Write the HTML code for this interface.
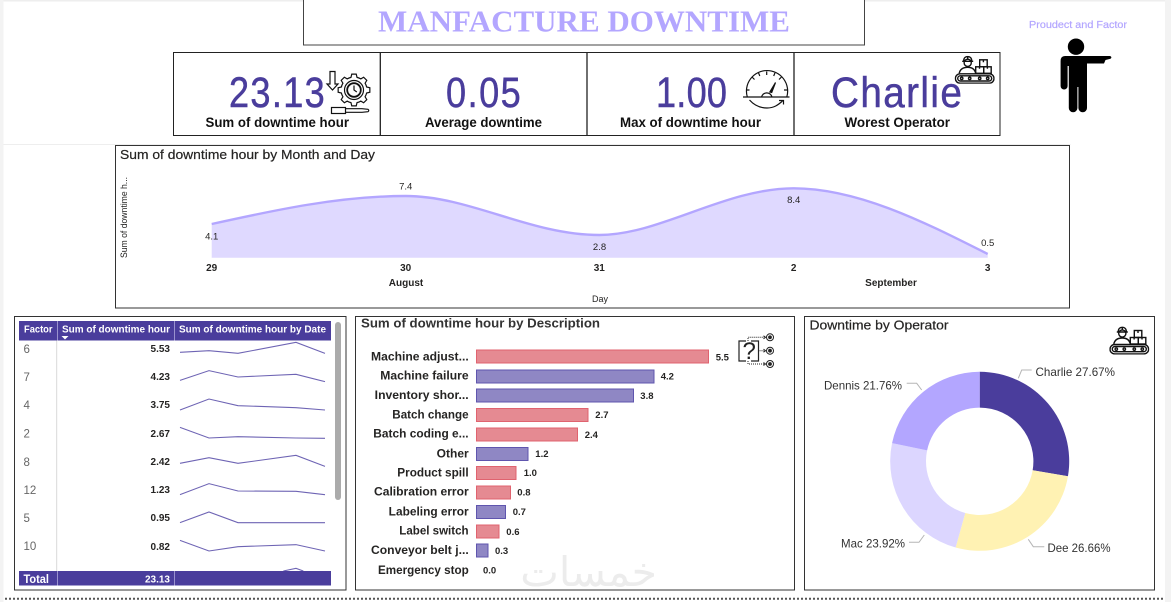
<!DOCTYPE html>
<html lang="en">
<head>
<meta charset="utf-8">
<title>Manfacture Downtime</title>
<style>
html,body{margin:0;padding:0;width:1171px;height:602px;overflow:hidden;background:#fff}
svg{display:block;font-family:"Liberation Sans",sans-serif}
.t{fill:#252423}
.b{font-weight:bold}
</style>
</head>
<body>
<svg width="1171" height="602" viewBox="0 0 1171 602" xmlns="http://www.w3.org/2000/svg">
<defs>
<symbol id="conv" viewBox="0 0 40 28" width="40" height="28">
  <g fill="none" stroke="#111" stroke-width="1.4">
    <rect x=".7" y="18" width="38.6" height="9.4" rx="4.7"/>
    <rect x="3" y="20" width="34" height="5.2" rx="2.6"/>
    <circle cx="7" cy="22.6" r="1.2"/><circle cx="15" cy="22.6" r="1.2"/><circle cx="25" cy="22.6" r="1.2"/><circle cx="33" cy="22.6" r="1.2"/>
    <path d="M4.5 17.5C5.5 13 9 11.5 13 11.5S20 13 21 17.5"/>
    <circle cx="13" cy="7" r="3.6"/>
    <path d="M7.5 5.5H18.5M9 5C9 2 11 .8 13 .8S17 2 17 5M13 .5V3.5"/>
    <rect x="21" y="11" width="8" height="6.5"/><rect x="29" y="11" width="7.5" height="6.5"/><rect x="25" y="4" width="7.5" height="7"/>
    <path d="M28.7 4V6.5M24.8 11V13M32.7 11V13"/>
  </g>
</symbol>
</defs>

<!-- page chrome -->
<rect x="0" y="0" width="1171" height="1.5" fill="#eeeeee"/>
<rect x="0" y="0" width="3.5" height="602" fill="#f3f3f3"/>
<rect x="1165" y="0" width="6" height="602" fill="#f3f3f3"/>
<rect x="3.5" y="144" width="1067" height="1" fill="#eeeeee"/>
<line x1="5" y1="598.8" x2="1165" y2="598.8" stroke="#555" stroke-width="2" stroke-dasharray="2 2"/>

<!-- title -->
<rect x="303.5" y="-2" width="561" height="47" fill="#fff" stroke="#444" stroke-width="1"/>
<text x="378" y="31.5" textLength="412" lengthAdjust="spacingAndGlyphs" font-family="'Liberation Serif',serif" font-weight="bold" font-size="30.5" fill="#B3A6FF">MANFACTURE DOWNTIME</text>

<!-- KPI row -->
<rect x="173.5" y="52.5" width="826.5" height="83" fill="#fff" stroke="#222" stroke-width="1"/>
<path d="M380.3 52V136M587 52V136M794 52V136" stroke="#222" stroke-width="1.3"/>
<g font-size="43" fill="#4A3D9C" stroke="#4A3D9C" stroke-width=".5">
  <text transform="translate(229,107) scale(.84,1)" textLength="114" lengthAdjust="spacing">23.13</text>
  <text transform="translate(446,107) scale(.84,1)" textLength="89" lengthAdjust="spacing">0.05</text>
  <text transform="translate(656,107) scale(.84,1)" textLength="84.5" lengthAdjust="spacing">1.00</text>
  <text transform="translate(831,107) scale(.9,1)" textLength="145.5" lengthAdjust="spacing">Charlie</text>
</g>
<g font-size="13.5" font-weight="bold" fill="#111">
  <text x="205.5" y="127" textLength="143.5" lengthAdjust="spacingAndGlyphs">Sum of downtime hour</text>
  <text x="425" y="127" textLength="117" lengthAdjust="spacingAndGlyphs">Average downtime</text>
  <text x="620" y="127" textLength="141" lengthAdjust="spacingAndGlyphs">Max of downtime hour</text>
  <text x="844.5" y="127" textLength="105.5" lengthAdjust="spacingAndGlyphs">Worest Operator</text>
</g>

<!-- gear / screwdriver icon -->
<g fill="none" stroke="#111" stroke-width="1.2">
  <path d="M330 71.5H335V84H338L332.5 90 327 84H330Z"/>
  <g transform="translate(354,90)">
    <path d="M-3.03-12.64L-2.23-15.84H2.23L3.03-12.64A13 13 0 0 1 6.79-11.08L9.62-12.78L12.78-9.62L11.08-6.79A13 13 0 0 1 12.64-3.03L15.84-2.23V2.23L12.64 3.03A13 13 0 0 1 11.08 6.79L12.78 9.62L9.62 12.78L6.79 11.08A13 13 0 0 1 3.03 12.64L2.23 15.84H-2.23L-3.03 12.64A13 13 0 0 1-6.79 11.08L-9.62 12.78L-12.78 9.62L-11.08 6.79A13 13 0 0 1-12.64 3.03L-15.84 2.23V-2.23L-12.64-3.03A13 13 0 0 1-11.08-6.79L-12.78-9.62L-9.62-12.78L-6.79-11.08A13 13 0 0 1-3.03-12.64Z"/>
    <circle r="9.5" stroke-width="1.2"/>
    <circle r="6.8" stroke-width="1.8"/>
    <path d="M0-4.5V0L2.8 2"/>
  </g>
  <rect x="331.5" y="107.5" width="14" height="6"/>
  <path d="M345.5 108.7H362L368 109.3Q369.5 110.5 368 111.7L362 112.3H345.5"/>
</g>

<!-- speedometer icon -->
<g fill="none" stroke="#111" stroke-width="1.2">
  <path d="M747.3 97A20.6 20.6 0 1 1 786.8 97"/>
  <path d="M743 97H789.5" stroke-width="1.3"/>
  <path d="M766.7 71.5V75M752 77L754.5 79.5M781.5 77L779 79.5M746 90H749.5M784 90H787.5M758.5 72.8L759.8 76M775 72.8L773.7 76"/>
  <path d="M761.5 97A5.4 5.4 0 0 1 772 97"/>
  <path d="M769.5 92.5L775.5 82.5L771.5 93" fill="#111"/>
  <path d="M749.5 100C754 105 760 108 767 108S778 105 782.5 101"/>
  <path d="M779 100.5H783.5V104.5"/>
</g>

<!-- conveyor icon (KPI) -->
<use href="#conv" x="954.7" y="55.8"/>

<!-- pointing person -->
<text x="1029" y="28" textLength="98" lengthAdjust="spacingAndGlyphs" font-size="10" fill="#B3A6FF" stroke="#B3A6FF" stroke-width=".2">Proudect and Factor</text>
<circle cx="1076" cy="46.7" r="8.2" fill="#000"/>
<path fill="#000" d="M1065 56H1110Q1112.5 57 1110.5 58.8L1105.5 60L1104 63.5H1087V108a4.3 4.3 0 0 1-8.6 0V87H1077.4V108a4.3 4.3 0 0 1-8.6 0V66H1067.6V86a3.5 3.5 0 0 1-7 0V61Q1060.6 56 1065 56Z"/>

<!-- line chart panel -->
<rect x="115.5" y="145.5" width="954" height="162.5" fill="#fff" stroke="#333" stroke-width="1"/>
<text x="120" y="159" textLength="255" lengthAdjust="spacingAndGlyphs" font-size="13" class="t" stroke="#252423" stroke-width=".2">Sum of downtime hour by Month and Day</text>
<text transform="translate(127,258) rotate(-90)" textLength="81" lengthAdjust="spacingAndGlyphs" font-size="9.5" class="t">Sum of downtime h...</text>
<path d="M211.7 224C275 210 340 196 405.7 196C470 196 530 235 599.3 235C660 235 725 188.3 793.7 188.3C860 188.3 930 225 987.7 254V257.7H211.7Z" fill="#DFD9FF"/>
<path d="M211.7 224C275 210 340 196 405.7 196C470 196 530 235 599.3 235C660 235 725 188.3 793.7 188.3C860 188.3 930 225 987.7 254" fill="none" stroke="#B3A6FF" stroke-width="2.4"/>
<g font-size="9.5" text-anchor="middle" class="t">
  <text x="211.7" y="239.5">4.1</text>
  <text x="405.7" y="189.5">7.4</text>
  <text x="599.5" y="250">2.8</text>
  <text x="793.7" y="203">8.4</text>
  <text x="987.7" y="246">0.5</text>
</g>
<g font-size="10" font-weight="bold" text-anchor="middle" class="t">
  <text x="211.7" y="271">29</text>
  <text x="405.7" y="271">30</text>
  <text x="599.3" y="271">31</text>
  <text x="793.7" y="271">2</text>
  <text x="987.7" y="271">3</text>
  <text x="406" y="286">August</text>
  <text x="891" y="286">September</text>
</g>
<text x="600" y="302" font-size="9" text-anchor="middle" class="t">Day</text>

<!-- table panel -->
<rect x="14.5" y="316.5" width="331.5" height="273.5" fill="#fff" stroke="#333" stroke-width="1"/>
<line x1="56.7" y1="340" x2="56.7" y2="571" stroke="#d9d9d9" stroke-width="1"/>
<g transform="translate(0,310) scale(.33333)" fill="none" stroke="#6E64B4" stroke-width="3.2">
  <polyline points="540,127 627,122 714,130 888,97 975,130"/>
  <polyline points="540,211 627,182 714,201 888,193 975,215"/>
  <polyline points="540,300 627,267 714,287 888,293 975,300"/>
  <polyline points="540,352 627,384 714,380 888,384 975,385"/>
  <polyline points="540,460 627,443 714,460 888,436 975,469"/>
  <polyline points="540,554 627,521 714,543 888,544 975,554"/>
  <polyline points="540,638 627,606 714,638 888,638 975,638"/>
  <polyline points="540,691 627,723 714,710 888,704 975,723"/>
  <polyline points="850,783 888,775 910,783"/>
</g>
<rect x="19" y="321" width="312" height="19.5" fill="#4A3D9C"/>
<rect x="19" y="571" width="312" height="14.5" fill="#4A3D9C"/>
<path d="M57.5 321V340.5M174.5 321V340.5M57.5 571V585.5M174.5 571V585.5" stroke="#9A92CE" stroke-width="1"/>
<path d="M61.5 336H68.5L65 339.5Z" fill="#fff"/>
<g font-size="10" font-weight="bold" fill="#fff">
  <text x="24" y="332.5" textLength="28.5" lengthAdjust="spacingAndGlyphs">Factor</text>
  <text x="62" y="332.5" textLength="108" lengthAdjust="spacingAndGlyphs">Sum of downtime hour</text>
  <text x="179" y="332.5" textLength="147" lengthAdjust="spacingAndGlyphs">Sum of downtime hour by Date</text>
  <text x="23.5" y="583" textLength="25.5" lengthAdjust="spacingAndGlyphs" font-size="11.5">Total</text>
  <text x="170" y="582.5" text-anchor="end" font-size="10">23.13</text>
</g>
<g font-size="11.5" fill="#666">
  <text x="23.5" y="353">6</text>
  <text x="23.5" y="381">7</text>
  <text x="23.5" y="409">4</text>
  <text x="23.5" y="437.5">2</text>
  <text x="23.5" y="466">8</text>
  <text x="23.5" y="494">12</text>
  <text x="23.5" y="522">5</text>
  <text x="23.5" y="550">10</text>
</g>
<g font-size="10" font-weight="bold" fill="#252423" text-anchor="end">
  <text x="170" y="352">5.53</text>
  <text x="170" y="380">4.23</text>
  <text x="170" y="408">3.75</text>
  <text x="170" y="437">2.67</text>
  <text x="170" y="465">2.42</text>
  <text x="170" y="493">1.23</text>
  <text x="170" y="521">0.95</text>
  <text x="170" y="550">0.82</text>
</g>
<rect x="335" y="322" width="6" height="178" rx="3" fill="#ababab"/>

<!-- bar chart panel -->
<rect x="355.5" y="316.5" width="439" height="273.5" fill="#fff" stroke="#333" stroke-width="1"/>
<!-- watermark -->
<svg x="356" y="555" width="438" height="34.5" viewBox="356 555 438 34.5">
  <text x="657" y="586" font-family="'DejaVu Sans',sans-serif" font-size="41" fill="#ececec" direction="rtl">خمسات</text>
</svg>
<text x="361" y="327.5" textLength="239" lengthAdjust="spacingAndGlyphs" font-size="12.5" font-weight="bold" fill="#333">Sum of downtime hour by Description</text>
<g stroke-width="1">
  <g fill="#E58A92" stroke="#E0636F">
    <rect x="476.5" y="350" width="232" height="13"/>
    <rect x="476.5" y="408.5" width="111.5" height="13"/>
    <rect x="476.5" y="428" width="101" height="13"/>
    <rect x="476.5" y="466.5" width="39.5" height="13"/>
    <rect x="476.5" y="486" width="34" height="13"/>
    <rect x="476.5" y="525" width="22.5" height="13"/>
  </g>
  <g fill="#8F87C4" stroke="#5F55AE">
    <rect x="476.5" y="370" width="177.5" height="13"/>
    <rect x="476.5" y="389" width="157" height="13"/>
    <rect x="476.5" y="447.5" width="51.5" height="13"/>
    <rect x="476.5" y="505.5" width="29" height="13"/>
    <rect x="476.5" y="544" width="11.5" height="13"/>
  </g>
</g>
<g font-size="11.5" font-weight="bold" fill="#252423">
  <text x="371" y="360.7" textLength="97.7" lengthAdjust="spacingAndGlyphs">Machine adjust...</text>
  <text x="380.3" y="379.7" textLength="88.3" lengthAdjust="spacingAndGlyphs">Machine failure</text>
  <text x="374.7" y="399" textLength="94" lengthAdjust="spacingAndGlyphs">Inventory shor...</text>
  <text x="392.3" y="418.7" textLength="76.3" lengthAdjust="spacingAndGlyphs">Batch change</text>
  <text x="373.3" y="437.7" textLength="95.3" lengthAdjust="spacingAndGlyphs">Batch coding e...</text>
  <text x="436.7" y="457.7" textLength="32" lengthAdjust="spacingAndGlyphs">Other</text>
  <text x="397.3" y="476.7" textLength="71.3" lengthAdjust="spacingAndGlyphs">Product spill</text>
  <text x="374" y="495.7" textLength="94.7" lengthAdjust="spacingAndGlyphs">Calibration error</text>
  <text x="388.7" y="515.7" textLength="80" lengthAdjust="spacingAndGlyphs">Labeling error</text>
  <text x="399.3" y="534.7" textLength="69.3" lengthAdjust="spacingAndGlyphs">Label switch</text>
  <text x="371" y="554" textLength="97.7" lengthAdjust="spacingAndGlyphs">Conveyor belt j...</text>
  <text x="378" y="574" textLength="90.7" lengthAdjust="spacingAndGlyphs">Emergency stop</text>
</g>
<g font-size="9.5" font-weight="bold" fill="#252423">
  <text x="715.7" y="360.5">5.5</text>
  <text x="660.7" y="379.5">4.2</text>
  <text x="640.3" y="399">3.8</text>
  <text x="595.3" y="418">2.7</text>
  <text x="584.7" y="438">2.4</text>
  <text x="535.3" y="457">1.2</text>
  <text x="523.7" y="476">1.0</text>
  <text x="517.3" y="495.5">0.8</text>
  <text x="512.7" y="515">0.7</text>
  <text x="506.3" y="535">0.6</text>
  <text x="495" y="554">0.3</text>
  <text x="483" y="573.5">0.0</text>
</g>
<!-- question icon -->
<g fill="none" stroke="#222" stroke-width="1">
  <path d="M746 341H739V361H746M751 341H758.5V361H751" stroke-width="1.2"/>
  <text x="742.5" y="359" font-size="24" fill="#222" stroke="none">?</text>
  <path d="M748 341V337.3H764M758.5 350.7H764M748 361V364H764" stroke-dasharray="1 1"/>
  <path d="M763.5 335.8L765.5 337.3L763.5 338.8M763.5 349.2L765.5 350.7L763.5 352.2M763.5 362.5L765.5 364L763.5 365.5"/>
  <circle cx="770" cy="337.3" r="3.5"/><circle cx="770" cy="350.7" r="3.5"/><circle cx="770" cy="364" r="3.5"/>
  <circle cx="770" cy="337.3" r="1.4" fill="#222"/><circle cx="770" cy="350.7" r="1.4" fill="#222"/><circle cx="770" cy="364" r="1.4" fill="#222"/>
</g>

<!-- donut panel -->
<rect x="804.5" y="316.5" width="350" height="273.5" fill="#fff" stroke="#333" stroke-width="1"/>
<text x="809.5" y="329.5" textLength="139" lengthAdjust="spacingAndGlyphs" font-size="13" class="t" stroke="#252423" stroke-width=".2">Downtime by Operator</text>
<use href="#conv" x="1109.3" y="326.5"/>
<path fill="#4A3D9C" d="M979.7 371.8A89.5 89.5 0 0 1 1067.95 476.23L1032.65 470.26A53.7 53.7 0 0 0 979.7 407.6Z"/>
<path fill="#FFF2B3" d="M1067.95 476.23A89.5 89.5 0 0 1 955.63 547.5L965.26 513.02A53.7 53.7 0 0 0 1032.65 470.26Z"/>
<path fill="#DCD6FF" d="M955.63 547.5A89.5 89.5 0 0 1 892.06 443.15L927.12 450.41A53.7 53.7 0 0 0 965.26 513.02Z"/>
<path fill="#B3A6FF" d="M892.06 443.15A89.5 89.5 0 0 1 979.7 371.8V407.6A53.7 53.7 0 0 0 927.12 450.41Z"/>
<g fill="none" stroke="#b5b5b5" stroke-width="1">
  <polyline points="1018.3,378.3 1021.7,370 1031.7,370"/>
  <polyline points="906.7,383.3 916.7,383.3 921.7,390"/>
  <polyline points="909,542.3 919,542.3 924.3,535"/>
  <polyline points="1028.3,539.3 1033.3,546.7 1044.3,546.7"/>
</g>
<g font-size="12" fill="#333">
  <text x="1035.5" y="376" textLength="79.5" lengthAdjust="spacingAndGlyphs">Charlie 27.67%</text>
  <text x="824" y="389.5" textLength="78" lengthAdjust="spacingAndGlyphs">Dennis 21.76%</text>
  <text x="841" y="547.5" textLength="64" lengthAdjust="spacingAndGlyphs">Mac 23.92%</text>
  <text x="1047.5" y="552" textLength="63" lengthAdjust="spacingAndGlyphs">Dee 26.66%</text>
</g>
</svg>
</body>
</html>
